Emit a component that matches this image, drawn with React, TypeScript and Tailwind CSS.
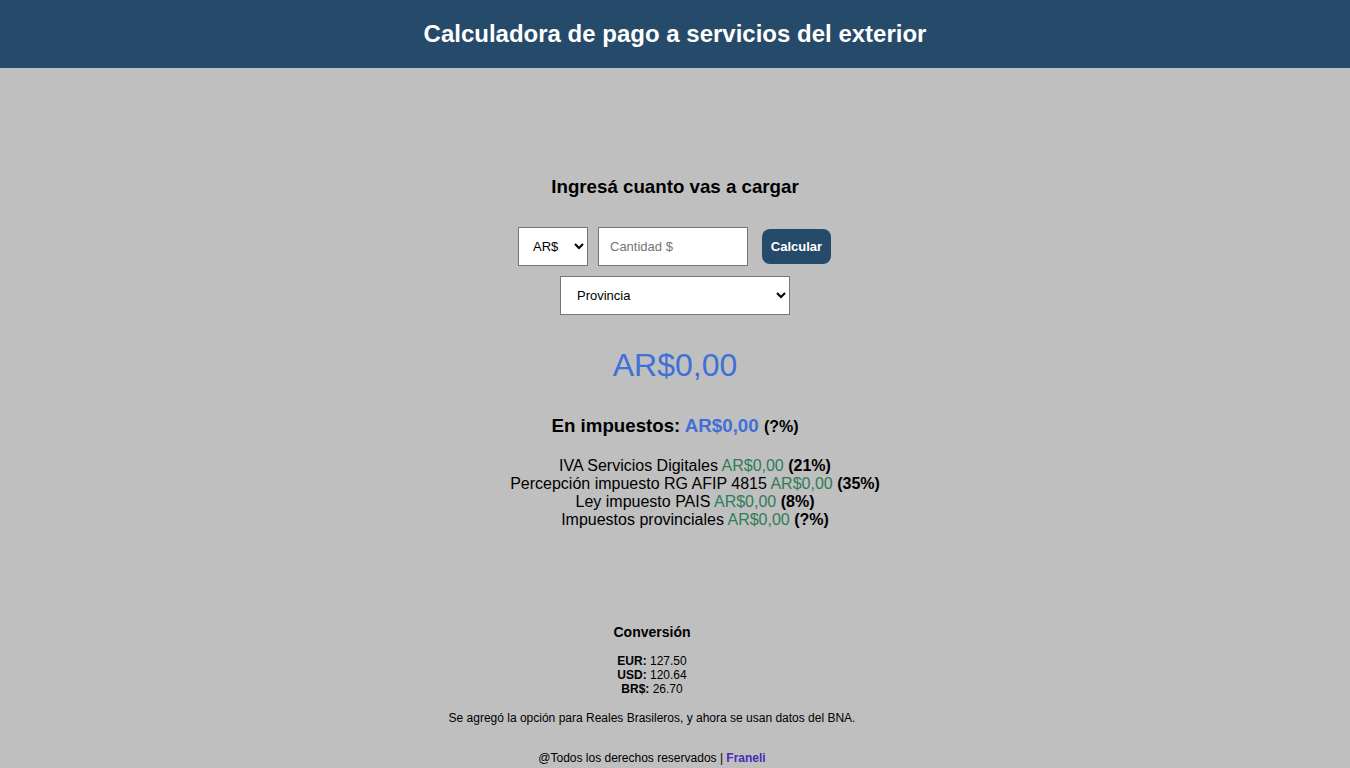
export default function App() {
  const taxes = [
    { label: "IVA Servicios Digitales", pct: "21%" },
    { label: "Percepción impuesto RG AFIP 4815", pct: "35%" },
    { label: "Ley impuesto PAIS", pct: "8%" },
    { label: "Impuestos provinciales", pct: "?%" },
  ];

  return (
    <div className="min-h-[768px] bg-[#bfbfbf] font-['Liberation_Sans',Arial,sans-serif] text-black">
      <header className="h-[68px] bg-[#264a69] flex items-center justify-center">
        <h1 className="text-[24px] font-bold text-white">
          Calculadora de pago a servicios del exterior
        </h1>
      </header>

      <main className="flex flex-col items-center pt-[106px]">
        <h2 className="text-[18.72px] font-bold leading-[26px]">
          Ingresá cuanto vas a cargar
        </h2>

        <div className="flex items-center mt-[27px] pr-[1px]">
          <select className="w-[70px] h-[39px] bg-white border border-[#767676] text-[13px] pl-[10px]">
            <option>AR$</option>
          </select>
          <input
            type="text"
            placeholder="Cantidad $"
            className="w-[150px] h-[39px] bg-white border border-[#767676] text-[13px] px-[11px] ml-[10px] placeholder:text-[#757575]"
          />
          <button
            type="button"
            className="ml-[14px] w-[69px] h-[35px] rounded-[8px] bg-[#264a69] text-white text-[13px] font-bold"
          >
            Calcular
          </button>
        </div>

        <select className="mt-[10px] w-[230px] h-[39px] bg-white border border-[#767676] text-[13px] pl-[12px]">
          <option>Provincia</option>
        </select>

        <p className="mt-[30px] text-[32px] leading-[40px] text-[#3f6fd8]">AR$0,00</p>

        <p className="mt-[29px] text-[18.72px] font-bold leading-[24px]">
          En impuestos: <span className="text-[#3f6fd8]">AR$0,00</span>{" "}
          <span className="text-[16px]">(?%)</span>
        </p>

        <ul className="mt-[18px] pl-10 flex flex-col items-center text-[16px] leading-[18px]">
          {taxes.map((t) => (
            <li key={t.label}>
              {t.label} <span className="text-[#2e7d58]">AR$0,00</span>{" "}
              <b>({t.pct})</b>
            </li>
          ))}
        </ul>

        <section className="mt-[95px] mr-[46px] flex flex-col items-center">
          <h3 className="text-[14px] font-bold leading-[16px]">Conversión</h3>
          <div className="mt-[14px] flex flex-col items-center text-[12px] leading-[14px]">
            <p>
              <b>EUR:</b> 127.50
            </p>
            <p>
              <b>USD:</b> 120.64
            </p>
            <p>
              <b>BR$:</b> 26.70
            </p>
          </div>
          <p className="mt-[15px] text-[12px] leading-[14px]">
            Se agregó la opción para Reales Brasileros, y ahora se usan datos del BNA.
          </p>
          <p className="mt-[26px] text-[12px] leading-[14px]">
            @Todos los derechos reservados |{" "}
            <a href="#" className="text-[#4a2bb5] font-bold">
              Franeli
            </a>
          </p>
        </section>
      </main>
    </div>
  );
}
